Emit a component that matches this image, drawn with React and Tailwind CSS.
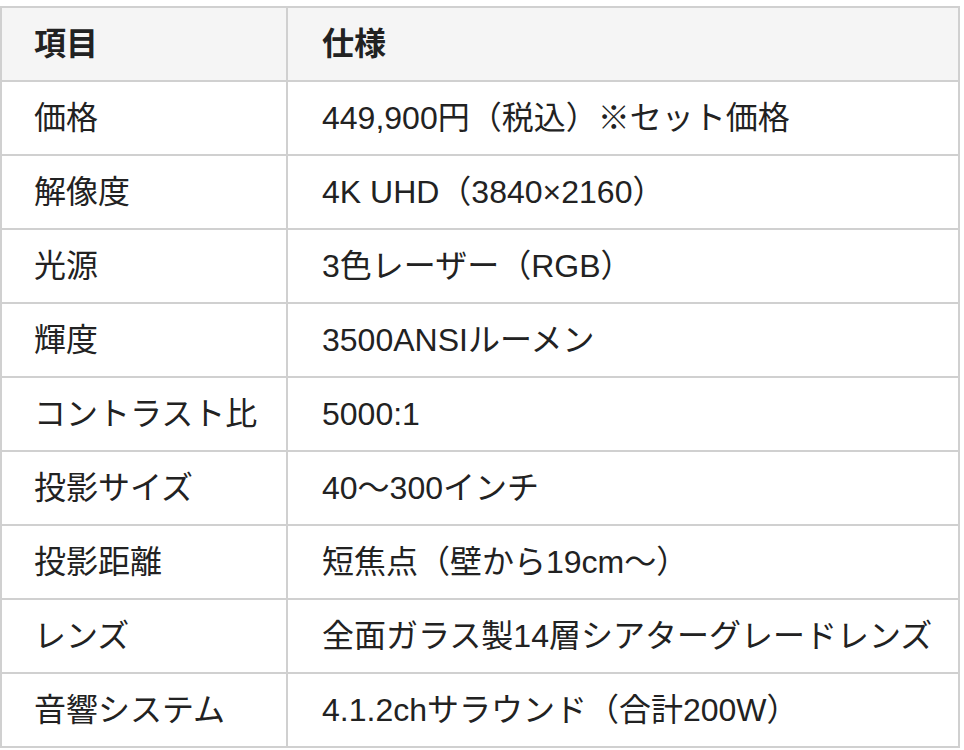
const rows = [
  ['価格', '449,900円（税込）※セット価格'],
  ['解像度', '4K UHD（3840×2160）'],
  ['光源', '3色レーザー（RGB）'],
  ['輝度', '3500ANSIルーメン'],
  ['コントラスト比', '5000:1'],
  ['投影サイズ', '40〜300インチ'],
  ['投影距離', '短焦点（壁から19cm〜）'],
  ['レンズ', '全面ガラス製14層シアターグレードレンズ'],
  ['音響システム', '4.1.2chサラウンド（合計200W）'],
];

export default function App() {
  return (
    <div
      className="bg-white w-[964px] h-[750px] pt-[6px] text-[#222222]"
      style={{ fontFamily: '"Liberation Sans", "Noto Sans CJK JP", sans-serif' }}
    >
      <div className="w-[960px] border-2 border-[#d0d0d0] text-[32px]">
        {/* header */}
        <div className="flex h-[72px] bg-[#f5f5f5] font-bold">
          <div className="w-[286px] border-r-2 border-[#d0d0d0] pl-[32px] flex items-center">項目</div>
          <div className="flex-1 pl-[34px] flex items-center">仕様</div>
        </div>
        {rows.map(([label, value]) => (
          <div key={label} className="flex h-[74px] border-t-2 border-[#d0d0d0]">
            <div className="w-[286px] border-r-2 border-[#d0d0d0] pl-[32px] flex items-center">{label}</div>
            <div className="flex-1 pl-[34px] flex items-center whitespace-nowrap">{value}</div>
          </div>
        ))}
      </div>
    </div>
  );
}
